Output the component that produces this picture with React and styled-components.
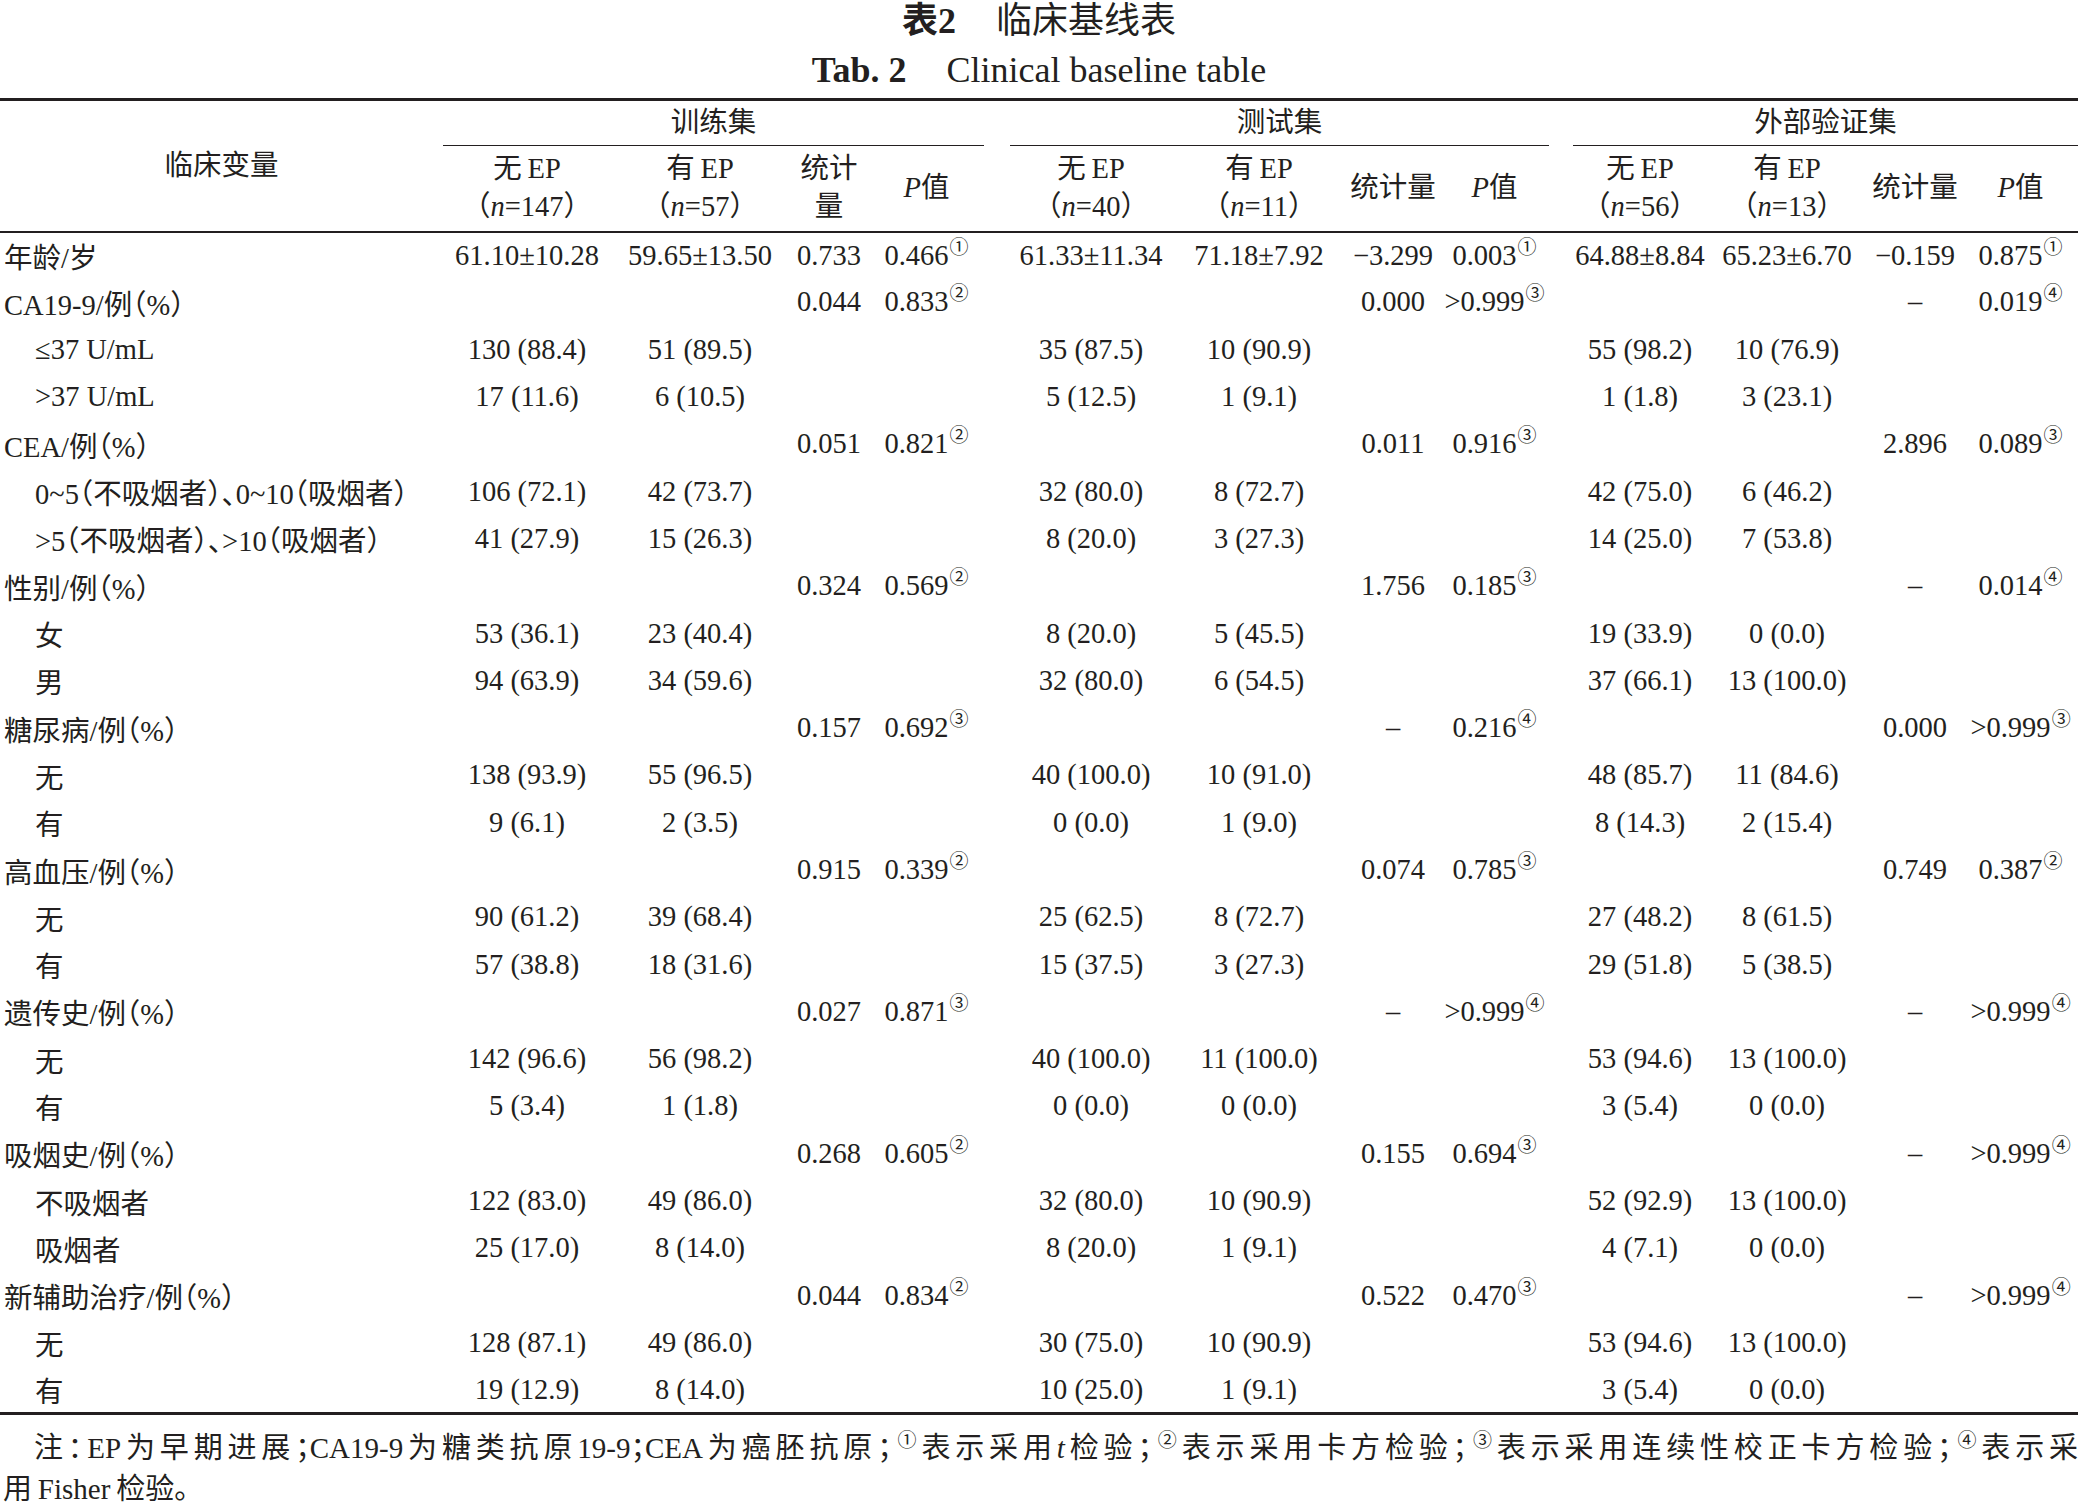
import React from 'react'
import styled, { createGlobalStyle } from 'styled-components'

const GlobalStyle = createGlobalStyle`
  html, body {
    margin: 0;
    padding: 0;
    background: #fff;
  }
  body {
    font-family: "Liberation Serif", "Noto Sans CJK SC", serif;
    color: #231f20;
    font-feature-settings: "halt" 1;
  }
`

const Page = styled.div`
  width: 2078px;
`

const Caption = styled.div`
  height: 42px;
  line-height: 42px;
  text-align: center;
  font-size: 36px;
  white-space: nowrap;
`

const CaptionEn = styled(Caption)`
  height: 56px;
  line-height: 56px;
`

const Strong = styled.b`
  font-weight: 700;
  margin-right: ${props => props.$gap}px;
`

const Table = styled.table`
  width: 2078px;
  table-layout: fixed;
  border-collapse: collapse;
  border-top: 3px solid #231f20;
  border-bottom: 3px solid #231f20;
  font-size: 28.5px;
`

const Col = styled.col`
  width: ${props => props.$w}px;
`

const Head = styled.thead`
  border-bottom: 2px solid #231f20;
`

const HeadRow = styled.tr`
  height: ${props => props.$h}px;
`

const HeadCell = styled.th`
  font-weight: 400;
  padding: 0;
  text-align: center;
  vertical-align: middle;
  line-height: 38px;
  white-space: ${props => (props.$wrap ? 'normal' : 'nowrap')};
`

const GroupCell = styled(HeadCell)`
  border-bottom: 1.5px solid #231f20;
`

const Spacer = styled.td`
  padding: 0;
`

const Row = styled.tr`
  height: 47.3px;
`

const Label = styled.td`
  padding: 0 0 0 ${props => (props.$indent ? 35 : 4)}px;
  text-align: left;
  white-space: nowrap;
  vertical-align: middle;
`

const Cell = styled.td`
  padding: 0;
  text-align: center;
  white-space: nowrap;
  vertical-align: middle;
`

const Sup = styled.sup`
  font-size: 19px;
  line-height: 0;
  vertical-align: baseline;
  position: relative;
  top: -11px;
  margin-left: 1px;
`

const Note = styled.div`
  margin-top: 13px;
  font-size: 29px;
  line-height: 41px;
`

const NoteFirst = styled.div`
  text-indent: 34px;
  text-align: justify;
  text-align-last: justify;
  white-space: nowrap;
`

const NoteLast = styled.div`
  padding-left: 3px;
`

const colWidths = [443, 168, 178, 80, 115, 26, 162, 174, 94, 109, 24, 134, 160, 96, 115]

const groups = [
  { name: '训练集', a: 147, b: 57, wrapStat: true },
  { name: '测试集', a: 40, b: 11 },
  { name: '外部验证集', a: 56, b: 13 }
]

// [label, indent, group1, group2, group3] — each group: [no EP, EP, stat, p, mark]
const rows = [
  ['年龄/岁', false,
    ['61.10±10.28', '59.65±13.50', '0.733', '0.466', '①'],
    ['61.33±11.34', '71.18±7.92', '−3.299', '0.003', '①'],
    ['64.88±8.84', '65.23±6.70', '−0.159', '0.875', '①']],
  ['CA19-9/例（%）', false,
    ['', '', '0.044', '0.833', '②'],
    ['', '', '0.000', '>0.999', '③'],
    ['', '', '–', '0.019', '④']],
  ['≤37 U/mL', true,
    ['130 (88.4)', '51 (89.5)'], ['35 (87.5)', '10 (90.9)'], ['55 (98.2)', '10 (76.9)']],
  ['>37 U/mL', true,
    ['17 (11.6)', '6 (10.5)'], ['5 (12.5)', '1 (9.1)'], ['1 (1.8)', '3 (23.1)']],
  ['CEA/例（%）', false,
    ['', '', '0.051', '0.821', '②'],
    ['', '', '0.011', '0.916', '③'],
    ['', '', '2.896', '0.089', '③']],
  ['0~5（不吸烟者）、0~10（吸烟者）', true,
    ['106 (72.1)', '42 (73.7)'], ['32 (80.0)', '8 (72.7)'], ['42 (75.0)', '6 (46.2)']],
  ['>5（不吸烟者）、>10（吸烟者）', true,
    ['41 (27.9)', '15 (26.3)'], ['8 (20.0)', '3 (27.3)'], ['14 (25.0)', '7 (53.8)']],
  ['性别/例（%）', false,
    ['', '', '0.324', '0.569', '②'],
    ['', '', '1.756', '0.185', '③'],
    ['', '', '–', '0.014', '④']],
  ['女', true,
    ['53 (36.1)', '23 (40.4)'], ['8 (20.0)', '5 (45.5)'], ['19 (33.9)', '0 (0.0)']],
  ['男', true,
    ['94 (63.9)', '34 (59.6)'], ['32 (80.0)', '6 (54.5)'], ['37 (66.1)', '13 (100.0)']],
  ['糖尿病/例（%）', false,
    ['', '', '0.157', '0.692', '③'],
    ['', '', '–', '0.216', '④'],
    ['', '', '0.000', '>0.999', '③']],
  ['无', true,
    ['138 (93.9)', '55 (96.5)'], ['40 (100.0)', '10 (91.0)'], ['48 (85.7)', '11 (84.6)']],
  ['有', true,
    ['9 (6.1)', '2 (3.5)'], ['0 (0.0)', '1 (9.0)'], ['8 (14.3)', '2 (15.4)']],
  ['高血压/例（%）', false,
    ['', '', '0.915', '0.339', '②'],
    ['', '', '0.074', '0.785', '③'],
    ['', '', '0.749', '0.387', '②']],
  ['无', true,
    ['90 (61.2)', '39 (68.4)'], ['25 (62.5)', '8 (72.7)'], ['27 (48.2)', '8 (61.5)']],
  ['有', true,
    ['57 (38.8)', '18 (31.6)'], ['15 (37.5)', '3 (27.3)'], ['29 (51.8)', '5 (38.5)']],
  ['遗传史/例（%）', false,
    ['', '', '0.027', '0.871', '③'],
    ['', '', '–', '>0.999', '④'],
    ['', '', '–', '>0.999', '④']],
  ['无', true,
    ['142 (96.6)', '56 (98.2)'], ['40 (100.0)', '11 (100.0)'], ['53 (94.6)', '13 (100.0)']],
  ['有', true,
    ['5 (3.4)', '1 (1.8)'], ['0 (0.0)', '0 (0.0)'], ['3 (5.4)', '0 (0.0)']],
  ['吸烟史/例（%）', false,
    ['', '', '0.268', '0.605', '②'],
    ['', '', '0.155', '0.694', '③'],
    ['', '', '–', '>0.999', '④']],
  ['不吸烟者', true,
    ['122 (83.0)', '49 (86.0)'], ['32 (80.0)', '10 (90.9)'], ['52 (92.9)', '13 (100.0)']],
  ['吸烟者', true,
    ['25 (17.0)', '8 (14.0)'], ['8 (20.0)', '1 (9.1)'], ['4 (7.1)', '0 (0.0)']],
  ['新辅助治疗/例（%）', false,
    ['', '', '0.044', '0.834', '②'],
    ['', '', '0.522', '0.470', '③'],
    ['', '', '–', '>0.999', '④']],
  ['无', true,
    ['128 (87.1)', '49 (86.0)'], ['30 (75.0)', '10 (90.9)'], ['53 (94.6)', '13 (100.0)']],
  ['有', true,
    ['19 (12.9)', '8 (14.0)'], ['10 (25.0)', '1 (9.1)'], ['3 (5.4)', '0 (0.0)']]
]

function GroupCells ({ values }) {
  const [a, b, stat = '', p = '', mark] = values
  return (
    <>
      <Cell>{a}</Cell>
      <Cell>{b}</Cell>
      <Cell>{stat}</Cell>
      <Cell>{p}{mark && <Sup>{mark}</Sup>}</Cell>
    </>
  )
}

function SubHeads ({ group }) {
  return (
    <>
      <HeadCell>无{'\u2009'}EP<br />（<i>n</i>={group.a}）</HeadCell>
      <HeadCell>有{'\u2009'}EP<br />（<i>n</i>={group.b}）</HeadCell>
      <HeadCell $wrap={group.wrapStat}>统计量</HeadCell>
      <HeadCell><i>P</i>值</HeadCell>
    </>
  )
}

export default function App () {
  return (
    <Page>
      <GlobalStyle />
      <Caption><Strong $gap={40}>表2</Strong>临床基线表</Caption>
      <CaptionEn><Strong $gap={40}>Tab. 2</Strong>Clinical baseline table</CaptionEn>
      <Table>
        <colgroup>
          {colWidths.map((w, idx) => <Col key={idx} $w={w} />)}
        </colgroup>
        <Head>
          <HeadRow $h={46}>
            <HeadCell rowSpan={2}>临床变量</HeadCell>
            <GroupCell colSpan={4}>{groups[0].name}</GroupCell>
            <Spacer />
            <GroupCell colSpan={4}>{groups[1].name}</GroupCell>
            <Spacer />
            <GroupCell colSpan={4}>{groups[2].name}</GroupCell>
          </HeadRow>
          <HeadRow $h={86}>
            <SubHeads group={groups[0]} />
            <Spacer />
            <SubHeads group={groups[1]} />
            <Spacer />
            <SubHeads group={groups[2]} />
          </HeadRow>
        </Head>
        <tbody>
          {rows.map(([label, indent, g1, g2, g3], idx) => (
            <Row key={idx}>
              <Label $indent={indent}>{label}</Label>
              <GroupCells values={g1} />
              <Spacer />
              <GroupCells values={g2} />
              <Spacer />
              <GroupCells values={g3} />
            </Row>
          ))}
        </tbody>
      </Table>
      <Note>
        <NoteFirst>
          注：EP为早期进展；CA19-9为糖类抗原19-9；CEA为癌胚抗原；<Sup>①</Sup>表示采用<i>t</i>检验；<Sup>②</Sup>表示采用卡方检验；<Sup>③</Sup>表示采用连续性校正卡方检验；<Sup>④</Sup>表示采
        </NoteFirst>
        <NoteLast>用{'\u2009'}Fisher{'\u2009'}检验。</NoteLast>
      </Note>
    </Page>
  )
}
